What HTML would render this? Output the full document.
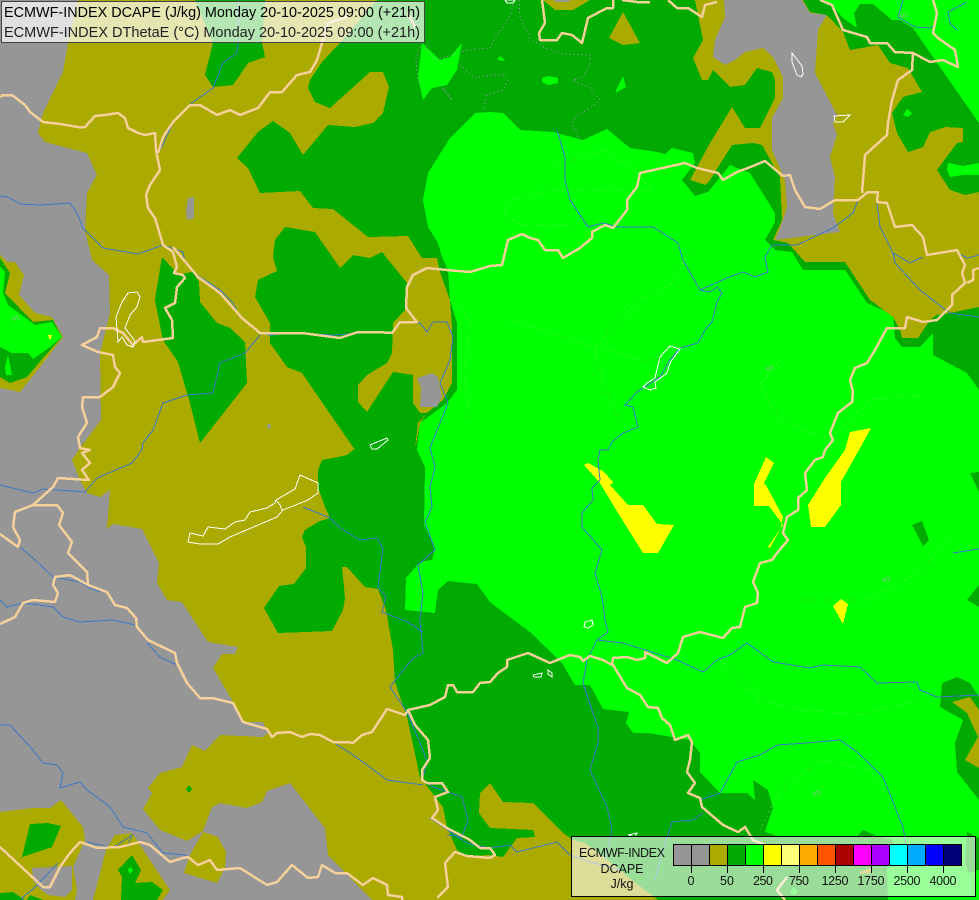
<!DOCTYPE html>
<html><head><meta charset="utf-8"><title>ECMWF-INDEX DCAPE</title>
<style>
html,body{margin:0;padding:0;background:#aaaa00;width:979px;height:900px;overflow:hidden}
svg{display:block}
.c{shape-rendering:crispEdges}
.b{fill:none;stroke:#f5d09a;stroke-width:2.5;stroke-linejoin:round;shape-rendering:crispEdges}
.r{fill:none;stroke:#3c78c8;stroke-width:1;shape-rendering:crispEdges}
.l{fill:none;stroke:#fff;stroke-width:1;shape-rendering:crispEdges}
.d{fill:none;stroke:#b48cdc;stroke-width:1;stroke-dasharray:1 3}
.e{fill:none;stroke:#78e070;stroke-width:1;stroke-dasharray:1 4}
text{font-family:"Liberation Sans",sans-serif}
</style></head><body>
<svg width="979" height="900" viewBox="0 0 979 900" xmlns="http://www.w3.org/2000/svg">
<rect width="979" height="900" fill="#aaaa00"/>
<g class="c">
<!-- grey main -->
<polygon fill="#969696" points="0,0 78,0 68,43 63,72 43,113 38,133 45,142 87,153 97,175 87,193 85,230 92,260 109,275 110,313 100,353 101,420 80,448 72,460 80,480 87,493 100,497 110,490 107,529 113,524 142,529 159,563 157,583 167,600 182,602 208,642 238,647 235,654 222,654 213,668 232,700 243,722 263,722 268,733 263,737 220,735 205,751 192,745 182,767 160,773 148,788 152,793 143,809 160,830 187,841 203,831 212,807 220,803 247,808 262,802 267,791 290,783 325,828 328,855 372,900 0,900"/>
<!-- SW olive patches -->
<polygon fill="#aaaa00" points="0,812 33,808 50,808 61,800 83,827 85,840 73,867 77,890 75,900 0,900"/>
<polygon fill="#969696" points="32,868 72,866 72,890 65,897 48,895 40,889 33,880"/>
<polygon fill="#00aa00" points="30,824 48,823 61,826 52,847 22,857"/>
<polygon fill="#00aa00" points="0,893 13,892 25,900 0,900"/>
<polygon fill="#00aa00" points="30,895 43,900 27,900"/>
<polygon fill="#aaaa00" points="115,835 132,833 170,890 163,900 93,900 106,850"/>
<polygon fill="#00aa00" points="132,855 141,870 135,883 152,882 163,890 157,900 121,900 122,877 118,870"/>
<polygon fill="#00ff00" points="130,867 133,870 130,874 128,870"/>
<polygon fill="#aaaa00" points="203,832 218,837 226,852 225,868 217,883 184,873 190,855"/>
<polygon fill="#00aa00" points="189,785 192,789 189,793 186,789"/>
<polygon fill="#969696" points="186,210 188,198 194,197 194,218 187,220"/>
<polygon fill="#969696" points="267,424 271,425 270,429 268,429"/>
<!-- West blob -->
<polygon fill="#aaaa00" points="0,255 7,262 15,262 24,275 19,295 35,313 52,317 63,337 40,367 20,392 0,388"/>
<polygon fill="#00aa00" points="0,258 10,273 5,293 33,322 53,320 62,337 43,358 27,377 10,383 0,377"/>
<polygon fill="#00ff00" points="0,267 5,272 3,293 8,305 35,325 52,322 62,337 50,347 33,359 28,353 12,353 0,347"/>
<polygon fill="#00ff00" points="5,367 8,355 12,375 6,375"/>
<polygon fill="#ffff00" points="48,335 52,335 51,339 49,339"/>
<!-- West strip dark -->
<polygon fill="#00aa00" points="162,257 174,270 175,275 193,272 199,282 200,302 217,323 230,328 245,342 247,383 200,443 190,403 178,362 163,340 155,300 156,293"/>
<!-- top left green -->
<polygon fill="#00aa00" points="195,0 265,0 262,43 265,57 248,63 233,85 213,87 205,75 213,43"/>
<!-- main dark north -->
<polygon fill="#00aa00" points="377,0 979,0 979,470 979,900 658,900 628,877 608,860 585,843 573,840 562,832 533,803 503,802 490,783 480,793 479,813 490,828 533,830 535,837 517,838 503,857 490,855 467,856 457,850 447,827 443,807 420,777 407,717 395,682 393,650 386,610 378,589 365,587 347,567 342,567 345,598 343,610 332,631 278,633 264,608 279,586 294,584 306,568 306,547 302,537 305,530 320,521 330,518 325,507 318,487 318,470 322,460 333,458 347,455 353,450 415,450 420,423 427,413 443,400 452,383 452,327 450,300 440,272 437,258 422,258 408,236 368,237 333,209 313,208 300,191 260,193 248,168 237,158 258,132 273,121 290,133 303,155 328,125 355,127 373,123 383,113 389,87 383,72 370,72 330,108 315,102 308,88 310,80 322,62 340,43"/>
<!-- central dark blob -->
<polygon fill="#00aa00" points="285,227 315,232 340,268 353,255 370,258 382,252 407,283 405,310 393,323 392,353 387,363 367,375 358,385 358,402 367,412 393,372 413,375 413,403 420,413 427,413 418,423 415,450 355,450 302,373 287,367 270,343 270,323 255,297 258,280 277,271 273,257 275,240"/>
<polygon fill="#969696" points="417,378 432,373 438,377 442,397 437,407 420,407 421,388"/>
<!-- north interior -->
<polygon fill="#00ff00" points="418,78 422,43 440,60 450,57 462,43 457,70 447,85 432,88 423,100"/>
<polygon fill="#00ff00" points="497,60 500,56 505,61"/>
<polygon fill="#00ff00" points="542,78 548,76 558,78 558,83 548,85 542,82"/>
<polygon fill="#00ff00" points="615,93 623,76 626,87"/>
<polygon fill="#aaaa00" points="623,12 640,43 623,45 609,38"/>
<polygon fill="#aaaa00" points="543,0 590,0 573,10 555,10"/>
<polygon fill="#969696" points="553,0 572,0 567,2 557,2"/>
<!-- bright main -->
<polygon fill="#00ff00" points="475,113 490,112 503,113 520,130 553,132 583,140 607,129 630,148 657,152 665,154 672,148 693,153 695,163 682,180 695,196 708,192 730,165 747,172 750,173 775,213 775,222 765,240 775,250 792,252 803,270 845,270 867,303 893,315 895,338 902,347 920,347 933,333 933,355 967,373 979,390 979,900 888,900 887,868 893,840 877,836 863,830 857,836 777,836 765,832 773,808 768,790 753,780 755,800 747,793 720,793 700,772 700,753 690,740 672,737 648,733 633,733 626,723 629,712 603,709 590,685 575,685 562,663 530,632 503,612 490,602 477,584 448,581 438,590 435,613 405,610 406,578 420,562 432,560 435,548 424,525 425,467 417,450 420,423 447,403 457,390 457,323 450,300 448,270 442,257 438,243 428,227 423,200 428,173 450,138"/>
<!-- NE olive -->
<polygon fill="#aaaa00" points="695,0 803,0 810,12 827,15 843,32 850,50 878,45 890,63 908,68 922,92 903,97 892,113 897,133 908,152 923,147 930,132 945,127 963,128 963,142 957,143 937,170 950,190 965,195 979,192 979,307 950,313 937,315 930,320 918,338 902,338 900,330 893,317 870,300 845,262 805,262 788,243 773,240 782,220 780,177 762,145 753,143 732,145 710,180 705,185 690,180 710,143 732,107 745,128 760,128 775,98 775,80 772,72 757,68 745,85 730,87 713,70 708,80 702,80 693,58 703,40"/>
<!-- NE bright -->
<polygon fill="#00ff00" points="820,0 832,5 843,18 857,28 854,13 860,4 873,4 892,20 900,20 913,28 933,57 979,123 979,0"/>
<polygon fill="#00ff00" points="903,115 907,109 912,113 908,117"/>
<polygon fill="#00ff00" points="948,163 963,166 979,163 979,175 963,175 950,177 947,170"/>
<!-- lake -->
<polygon fill="#969696" points="724,0 802,0 810,13 827,15 818,30 815,73 837,115 833,123 837,135 830,157 835,177 833,213 840,232 775,240 783,220 787,207 785,180 772,150 772,118 783,98 783,77 773,57 763,48 745,52 735,60 725,65 713,57 715,40 725,17"/>
<!-- east dark patches -->
<polygon fill="#00aa00" points="912,525 922,521 929,540 923,546"/>
<polygon fill="#00aa00" points="970,473 979,472 979,492"/>
<polygon fill="#00aa00" points="967,600 979,585 979,607"/>
<polygon fill="#00aa00" points="942,683 957,677 970,683 979,697 979,800 957,772 955,743 963,720 940,707"/>
<polygon fill="#aaaa00" points="952,702 970,697 979,710 979,768 965,760 978,737 967,713"/>
<polygon fill="#00aa00" points="967,832 979,838 979,870 968,873 965,860"/>
<polygon fill="#aaaa00" points="860,872 870,868 873,873 860,874"/>
<polygon fill="#00ff00" points="793,887 798,891 794,896 790,892"/>
<!-- yellow -->
<polygon fill="#ffff00" points="584,465 588,463 603,471 613,482 610,485 628,505 643,505 657,524 674,525 658,553 643,553 618,513 600,483"/>
<polygon fill="#ffff00" points="766,457 774,463 764,483 767,487 783,517 781,528 770,548 768,547 783,525 769,506 754,506 754,484"/>
<polygon fill="#ffff00" points="850,432 871,428 859,450 841,482 841,505 825,527 811,527 808,505 825,478 845,450"/>
<polygon fill="#ffff00" points="841,599 848,604 843,624 833,606"/>
</g>
<!-- dotted contours -->
<g>
<polyline class="d" points="513,5 510,15 505,25 495,38 490,48 470,50 460,52 443,58 435,60 425,48 430,40"/>
<polyline class="d" points="422,43 416,58 417,72 420,85"/>
<polyline class="d" points="519,0 520,18 530,38 545,48 565,54 590,55 590,65 582,78 573,80 590,88 600,100 590,108 575,118 572,125 580,140"/>
<polyline class="d" points="460,65 475,78 490,75 505,75 508,80 503,90 487,95 484,108"/>
<polyline class="d" points="443,85 445,92 452,100 442,88"/>
<polyline class="e" points="555,165 605,150 640,175 650,190 620,190 550,190 510,200 505,215 520,225 575,225"/>
<polyline class="e" points="690,250 670,285 640,300 610,330 595,350 605,390 620,420"/>
<polyline class="e" points="510,320 560,335 590,345 650,362 680,340"/>
<polyline class="e" points="780,360 760,385 780,420 830,440 870,400 920,395"/>
<polyline class="e" points="720,660 760,700 800,710 860,715 920,700"/>
<polyline class="e" points="760,830 780,790 820,760 870,770 890,800"/>
<polyline class="e" points="800,600 870,600 920,570 950,540"/>
<polyline class="e" points="450,300 470,320 465,380 470,420"/>
</g>
<text x="766" y="372" font-size="10" fill="#7fc07f" transform="rotate(-90 769 368)">5</text>
<text x="816" y="792" font-size="10" fill="#7fc07f" transform="rotate(-90 820 792)">5</text>
<text x="882" y="582" font-size="10" fill="#7fc07f" transform="rotate(-90 886 578)">5</text>
<text x="12" y="322" font-size="10" fill="#7fc07f" transform="rotate(-90 15 318)">5</text>
<text x="900" y="17" font-size="10" fill="#7fc07f" transform="rotate(-90 904 14)">5</text>
<!-- rivers -->
<g>
<polyline class="r" points="0,196 8,197 20,204 40,205 70,203 77,213 83,228 103,248 138,254 163,245 183,252 185,263 197,275 220,290 233,303 240,317 260,333 270,335 293,333 333,335 377,332 392,333 400,322 420,323 427,332 433,322 447,322 453,337 450,360 440,383 448,403 430,448 435,467 430,487 432,507 425,522 435,550 418,565 423,593 420,620 423,653 413,658 390,687 407,712 423,750 427,763 422,780 433,787 448,792 462,797 468,820 462,837 447,835"/>
<polyline class="r" points="260,335 245,353 220,363 213,393 187,395 163,403 153,430 143,443 142,450 132,463 97,478 85,492 43,489 33,493 0,485"/>
<polyline class="r" points="238,0 238,43 237,53 223,63 213,88 193,102 173,123 160,150"/>
<polyline class="r" points="20,547 33,558 53,577 80,582 88,587 100,592"/>
<polyline class="r" points="0,600 7,607 23,603 53,607 63,617 80,622 113,620 135,625"/>
<polyline class="r" points="147,643 160,657 177,665"/>
<polyline class="r" points="0,725 10,725 33,750 43,763 57,765 63,773 60,788 80,782 87,790 110,807 123,827 147,833 163,853 185,855 198,865"/>
<polyline class="r" points="58,863 32,890 23,897 22,900"/>
<polyline class="r" points="87,842 113,848 132,835 128,845"/>
<polyline class="r" points="303,507 330,518 340,528 360,540 377,538 383,548 378,587 386,597 382,612 408,622 423,632"/>
<polyline class="r" points="330,740 353,755 367,765 387,780 423,785"/>
<polyline class="r" points="430,818 467,843 490,848 510,845 517,852 557,842 570,855 590,862 620,870"/>
<polyline class="r" points="557,130 565,157 565,180 570,200 588,227 603,223 618,227 653,227 678,243 683,260 700,290 710,292 717,287 722,293 717,302 712,322 705,330 698,343 680,348 670,360 660,377 637,392 625,405 633,407 638,427 623,433 612,442 608,450 600,450 598,460 600,480 592,488 593,500 582,513 582,527 602,550 595,573 602,597 605,620 608,632 597,640 587,660 583,683 593,713 598,727 598,743 590,770 607,807 612,830 605,860"/>
<polyline class="r" points="597,640 623,643 645,650 677,660 703,672 717,660 730,655 747,643 773,662 810,668 823,665 860,667 877,683 917,682 920,690 937,697 979,695"/>
<polyline class="r" points="700,800 720,793 737,762 760,755 777,745 807,743 840,740 857,752 883,777 903,827 907,850"/>
<polyline class="r" points="703,813 693,820 672,822 663,850 655,880"/>
<polyline class="r" points="953,553 979,549"/>
<polyline class="r" points="700,290 727,278 743,272 755,277 768,272 765,257 772,245 797,245 833,228 853,213 858,200"/>
<polyline class="r" points="877,203 880,227 893,253 910,263 923,257"/>
<polyline class="r" points="893,253 895,263 920,290 943,308 950,313 979,317"/>
<polyline class="r" points="958,253 967,258 979,255"/>
<polyline class="r" points="903,0 898,17 915,27 930,28 935,25"/>
<polyline class="r" points="967,2 948,12 950,23 957,30"/>
</g>
<!-- borders -->
<g>
<polyline class="b" points="0,97 3,95 12,95 25,105 30,112 43,122 60,124 78,127 85,127 95,116 105,115 118,113 125,118 128,128 138,133 145,135 155,133 156,150 158,160 160,170 150,185 146,195 148,208 155,218 158,228 163,245 173,252 177,267 174,273 183,275 185,278 177,287 175,303 165,308 172,320 173,338 143,342 142,337 133,345 123,333 113,328 100,328 97,337 82,345 98,352 113,355 115,367 120,373 113,387 100,397 83,397 82,407 87,423 78,437 80,448 90,450 82,453 90,463 82,470 89,480 58,478 53,487 33,505 15,512 13,527 20,540 18,547 0,534"/>
<polyline class="b" points="33,505 57,505 63,513 59,525 72,542 68,553 87,572 88,585 70,575 55,577 53,585 58,593 55,602 33,600 23,603 15,617 0,624"/>
<polyline class="b" points="88,585 107,592 115,605 127,608 136,618 137,627 148,640 175,653 177,663 187,683 200,698 212,698 233,703 243,722 267,729 272,737 277,733 290,732 302,737 310,734 320,735 333,742 347,742 353,743 362,735 372,732 387,709 405,715 408,710 430,705 445,697 448,685 453,685 457,692 473,692 480,683 490,682 498,673 507,667 507,660 528,653 550,663 570,655 580,657 583,661 590,656 603,660 612,665 613,658 627,657 637,660 645,658 645,652 667,663 678,653 683,637 700,632 723,638 732,628 740,627 745,607 757,603 758,593 753,582 760,563 772,560 777,553 788,540 783,533 787,517 798,510 798,498 807,490 805,473 815,460 823,457 825,450 833,440 830,433 838,413 852,402 853,392 850,380 855,368 867,363 875,350 887,328 905,328 907,317 923,322 937,320 952,305 952,295 965,283 962,273 965,265 957,250 927,255 923,237 912,225 895,227 887,203 877,202 878,192 868,192 858,200 835,200 820,209 805,207 795,190 790,175 783,176 765,161 748,168 737,172 723,180 718,173 697,168 685,163 640,173 637,187 627,200 627,210 613,228 605,225 592,232 592,238 580,248 563,258 558,250 545,250 538,240 530,238 522,234 508,240 502,265 490,266 470,272 447,270 427,268 413,275 407,287 406,308 417,322 400,322 392,333 377,332 358,332 340,338 302,333 293,333 260,333 242,318 220,293 198,277 173,247"/>
<polyline class="b" points="158,153 163,137 173,122 190,105 200,105 217,115 230,110 240,115 258,108 270,92 282,92 297,75 310,72 317,60 322,43 328,23 347,17"/>
<polyline class="b" points="408,13 415,27"/>
<polyline class="b" points="542,0 545,23 539,33 540,40 557,40 562,33 572,35 582,43 588,18 607,8 613,8 613,0"/>
<polyline class="b" points="622,0 637,2 650,2"/>
<polyline class="b" points="668,0 677,8 688,8 702,17 705,5 717,2"/>
<polyline class="b" points="820,0 832,5 843,30 867,37 870,43 887,43 895,52 913,53 930,62 943,60 958,67 955,50 938,38 933,33 937,13 933,0"/>
<polyline class="b" points="913,53 912,70 898,80 892,100 888,123 887,135 865,155 862,193"/>
<polyline class="b" points="967,283 973,280 973,270 979,268"/>
<polyline class="b" points="0,847 43,887 50,887 60,867 70,853 80,842 97,848 120,847 140,842 150,845 170,862 183,858 188,857 198,865 210,860 217,870 240,868 267,885 277,882 292,865 308,878 318,877 322,865 335,873 347,873 363,885 373,878 387,885 388,895 402,897 402,900"/>
<polyline class="b" points="408,710 415,725 428,740 430,758 422,770 422,780 427,783 442,783 448,792 435,797 438,810 432,818 447,828 470,840 480,848 490,848 495,855 490,858 467,856 455,852 445,863 448,887 437,898"/>
<polyline class="b" points="613,665 627,688 640,695 648,707 658,708 662,718 670,725 675,740 688,735 692,742 690,760 687,772 695,783 688,793 700,798 702,807 723,825 738,832 745,827 753,840 765,845"/>
<polyline class="b" points="787,877 777,890 785,900"/>
</g>
<!-- lakes -->
<g>
<polygon class="l" points="118,342 116,317 122,302 128,293 137,292 140,297 137,307 130,315 125,328 132,337 135,342 133,347 127,345 122,337"/>
<polygon class="l" points="188,542 190,533 203,536 208,527 225,529 235,522 245,520 250,512 267,508 275,503 276,500 295,489 300,475 318,483 318,493 308,500 283,510 277,517 230,537 218,544 200,544"/>
<polyline class="l" points="276,500 280,505 282,510"/>
<polygon class="l" points="370,445 387,438 388,440 377,449 372,449"/>
<polygon class="l" points="792,53 802,66 803,74 801,77 797,75 792,62"/>
<polygon class="l" points="834,116 850,115 843,122 835,122"/>
<polygon class="l" points="670,346 680,349 670,363 667,373 655,382 656,388 650,390 643,387 647,383 655,378 660,357"/>
<polygon class="l" points="585,622 592,620 593,625 588,628 584,627"/>
<polygon class="l" points="533,675 542,673 541,677 534,677"/>
<polygon class="l" points="548,670 552,673 552,677 548,674"/>
<polygon class="l" points="628,835 637,833 635,837"/>
<polygon class="l" points="505,0 515,0 513,3 507,3"/>
</g>
<!-- title box -->
<rect x="1.5" y="1.5" width="423" height="41" fill="#fff" fill-opacity=".7" stroke="#444" stroke-width="1" class="c"/>
<text x="4" y="17" font-size="15" fill="#000" textLength="416" lengthAdjust="spacingAndGlyphs">ECMWF-INDEX DCAPE (J/kg) Monday 20-10-2025 09:00 (+21h)</text>
<text x="4" y="37" font-size="15" fill="#222" textLength="416" lengthAdjust="spacingAndGlyphs">ECMWF-INDEX DThetaE (°C) Monday 20-10-2025 09:00 (+21h)</text>
<!-- legend -->
<rect x="571.5" y="836.5" width="404" height="60" fill="#fff" fill-opacity=".6" stroke="#000" stroke-width="1" class="c"/>
<g class="c" stroke="#000" stroke-width="1">
<rect x="673.5" y="844.5" width="18" height="21" fill="#969696"/>
<rect x="691.5" y="844.5" width="18" height="21" fill="#969696"/>
<rect x="709.5" y="844.5" width="18" height="21" fill="#aaaa00"/>
<rect x="727.5" y="844.5" width="18" height="21" fill="#00aa00"/>
<rect x="745.5" y="844.5" width="18" height="21" fill="#00ff00"/>
<rect x="763.5" y="844.5" width="18" height="21" fill="#ffff00"/>
<rect x="781.5" y="844.5" width="18" height="21" fill="#ffff78"/>
<rect x="799.5" y="844.5" width="18" height="21" fill="#ffaa00"/>
<rect x="817.5" y="844.5" width="18" height="21" fill="#ff5500"/>
<rect x="835.5" y="844.5" width="18" height="21" fill="#aa0000"/>
<rect x="853.5" y="844.5" width="18" height="21" fill="#ff00ff"/>
<rect x="871.5" y="844.5" width="18" height="21" fill="#aa00ff"/>
<rect x="889.5" y="844.5" width="18" height="21" fill="#00ffff"/>
<rect x="907.5" y="844.5" width="18" height="21" fill="#00aaff"/>
<rect x="925.5" y="844.5" width="18" height="21" fill="#0000ff"/>
<rect x="943.5" y="844.5" width="18" height="21" fill="#000078"/>
<path d="M691.5 866V873M727.5 866V873M763.5 866V873M799.5 866V873M835.5 866V873M871.5 866V873M907.5 866V873M943.5 866V873" fill="none"/>
</g>
<g font-size="12.5" fill="#111" text-anchor="middle">
<text x="691" y="885">0</text>
<text x="727" y="885">50</text>
<text x="763" y="885" textLength="20">250</text>
<text x="799" y="885" textLength="20">750</text>
<text x="835" y="885" textLength="27">1250</text>
<text x="871" y="885" textLength="27">1750</text>
<text x="907" y="885" textLength="27">2500</text>
<text x="943" y="885" textLength="27">4000</text>
<text x="622" y="857" textLength="86">ECMWF-INDEX</text>
<text x="622" y="873">DCAPE</text>
<text x="622" y="888">J/kg</text>
</g>
</svg>
</body></html>
